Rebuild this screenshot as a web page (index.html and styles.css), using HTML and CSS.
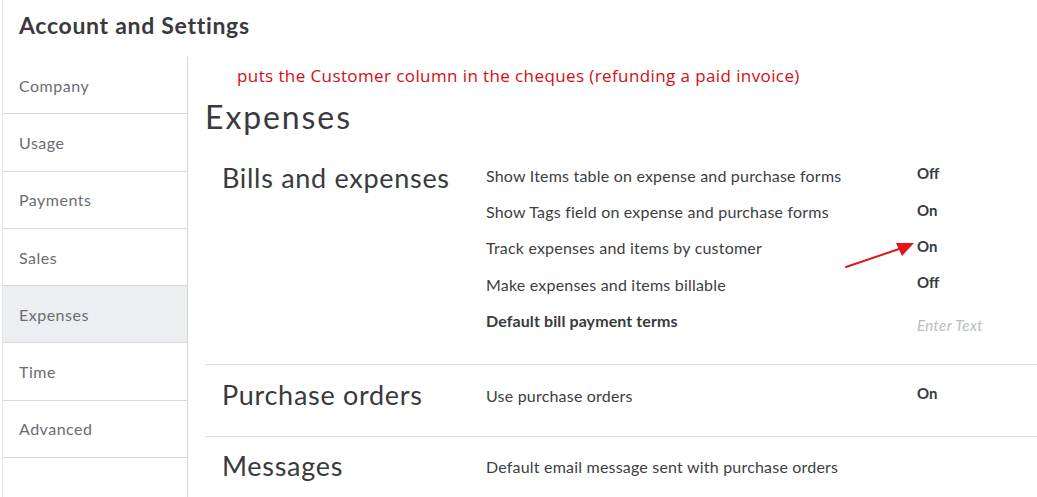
FILE: index.html
```html
<!DOCTYPE html>
<html>
<head>
<meta charset="utf-8">
<link rel="stylesheet" href="styles.css">
</head>
<body>
<div class="app">
  <header class="page-header">
    <h1 class="page-title">Account and Settings</h1>
  </header>
  <div class="main">
    <nav class="sidebar">
      <div class="nav-item">Company</div>
      <div class="nav-item">Usage</div>
      <div class="nav-item">Payments</div>
      <div class="nav-item">Sales</div>
      <div class="nav-item active">Expenses</div>
      <div class="nav-item">Time</div>
      <div class="nav-item">Advanced</div>
      <div class="nav-rest"></div>
    </nav>
    <main class="content">
      <p class="note">puts the Customer column in the cheques (refunding a paid invoice)</p>
      <h2 class="content-title">Expenses</h2>

      <section class="section first">
        <h3 class="section-title">Bills and expenses</h3>
        <div class="rows">
          <div class="row"><span class="label">Show Items table on expense and purchase forms</span><span class="value">Off</span></div>
          <div class="row"><span class="label">Show Tags field on expense and purchase forms</span><span class="value">On</span></div>
          <div class="row"><span class="label">Track expenses and items by customer</span><span class="value">On</span></div>
          <div class="row"><span class="label">Make expenses and items billable</span><span class="value">Off</span></div>
          <div class="row"><span class="label strong">Default bill payment terms</span><span class="value placeholder">Enter Text</span></div>
        </div>
      </section>

      <section class="section po">
        <h3 class="section-title">Purchase orders</h3>
        <div class="rows">
          <div class="row"><span class="label">Use purchase orders</span><span class="value">On</span></div>
        </div>
      </section>

      <section class="section msg">
        <h3 class="section-title">Messages</h3>
        <div class="rows">
          <div class="row"><span class="label">Default email message sent with purchase orders</span><span class="value"></span></div>
        </div>
      </section>

      <svg class="arrow" width="80" height="34" viewBox="0 0 80 34">
        <line x1="2" y1="30" x2="58" y2="11" stroke="#e3141b" stroke-width="2" stroke-linecap="round"/>
        <polygon points="70,6 52,6 58,19" fill="#e3141b"/>
      </svg>
    </main>
  </div>
</div>
</body>
</html>
```

FILE: styles.css
```css
* { box-sizing: border-box; }

html, body {
  margin: 0;
  padding: 0;
  background: #ffffff;
}

body {
  font-family: "Lato", "Noto Sans", sans-serif;
  color: #393a3d;
  width: 1037px;
  height: 497px;
  overflow: hidden;
}

.app {
  margin-left: 2px;
  border-left: 1px solid #e3e5e8;
  height: 497px;
}

.page-header {
  height: 57px;
  padding: 11px 0 0 16px;
}

.page-title {
  margin: 0;
  font-size: 23px;
  font-weight: 700;
  line-height: 28px;
  letter-spacing: 0.7px;
  color: #393a3d;
}

.main {
  display: flex;
  height: 440px;
}

.sidebar {
  width: 185px;
  flex: none;
  border-right: 1px solid #d4d7dc;
  display: flex;
  flex-direction: column;
}

.nav-item {
  height: 57.3px;
  border-bottom: 1px solid #d4d7dc;
  padding-left: 16px;
  display: flex;
  align-items: center;
  font-size: 16px;
  letter-spacing: 0.5px;
  color: #6b6c72;
}

.nav-item.active {
  background: #eceef1;
}

.content {
  flex: 1;
  position: relative;
  padding-left: 17px;
}

.note {
  margin: 0;
  padding: 7px 0 0 32px;
  font-family: "Open Sans", "Noto Sans", sans-serif;
  font-size: 17px;
  line-height: 24px;
  color: #d40c14;
  letter-spacing: 0.4px;
}

.content-title {
  margin: 9px 0 0 0;
  font-size: 32px;
  font-weight: 400;
  line-height: 40px;
  letter-spacing: 1.9px;
  color: #393a3d;
}

.section {
  display: grid;
  grid-template-columns: 281px 431px 1fr;
  border-bottom: 1px solid #dcdee2;
}

.section-title {
  margin: 0;
  padding-left: 17px;
  font-size: 27px;
  font-weight: 400;
  line-height: 36px;
  letter-spacing: 0.7px;
  color: #393a3d;
}

.rows {
  grid-column: 2 / 4;
  display: flex;
  flex-direction: column;
}

.row {
  display: grid;
  grid-template-columns: 431px 1fr;
  height: 36.4px;
  align-items: center;
}

.label {
  font-size: 16px;
  letter-spacing: 0.2px;
  color: #3d3e42;
}

.label.strong {
  font-weight: 700;
  letter-spacing: 0.1px;
  color: #393a3d;
}

.value {
  font-size: 15px;
  font-weight: 700;
  color: #393a3d;
  position: relative;
  top: -2px;
}

.value.placeholder {
  font-weight: 400;
  font-style: italic;
  font-size: 15px;
  letter-spacing: 0.4px;
  color: #b8bcc3;
  top: 4px;
}

.section.first {
  padding: 20px 0 25px 0;
}

.section.first .section-title {
  padding-top: 3px;
}

.section.po {
  padding: 12px 0 23px 0;
}

.section.msg {
  padding: 11px 0 30px 0;
  border-bottom: none;
}

.arrow {
  position: absolute;
  left: 656px;
  top: 180px;
}
```
